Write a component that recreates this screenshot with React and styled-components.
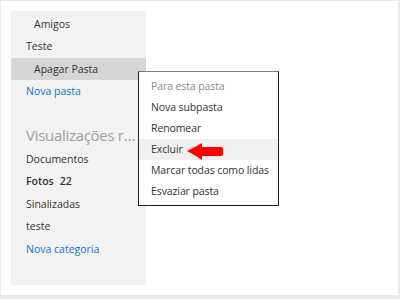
import styled, { createGlobalStyle } from "styled-components";

const GlobalStyle = createGlobalStyle`
  html, body {
    margin: 0;
    padding: 0;
    background: #e9e9e9;
  }
  body {
    font-family: "Open Sans", "Noto Sans", sans-serif;
  }
`;

const Frame = styled.div`
  width: 400px;
  height: 299px;
  padding: 1px 2px 4px 1px;
  box-sizing: border-box;
  background: #e9e9e9;
`;

const Panel = styled.div`
  position: relative;
  height: 100%;
  background: #fff;
  padding: 10px;
  box-sizing: border-box;
`;

const Sidebar = styled.nav`
  width: 135px;
  height: 274px;
  background: #f2f2f2;
  padding-top: 1.5px;
  box-sizing: border-box;
`;

const Item = styled.div`
  height: 22.5px;
  line-height: 22.5px;
  padding-left: ${(p) => (p.$indent ? "23px" : "15px")};
  font-size: 10.5px;
  color: ${(p) => (p.$link ? "#0f74c8" : "#333")};
  font-weight: ${(p) => (p.$bold ? 600 : 400)};
  background: ${(p) => (p.$selected ? "#d6d6d6" : "transparent")};
  white-space: nowrap;
`;

const Count = styled.span`
  margin-left: 6px;
`;

const Heading = styled.div`
  margin-top: 20px;
  height: 25px;
  line-height: 25px;
  padding: 0 4px 0 15px;
  font-size: 15px;
  letter-spacing: -0.3px;
  color: #a0a0a0;
  white-space: nowrap;
  overflow: hidden;
  text-overflow: ellipsis;
`;

const Menu = styled.div`
  position: absolute;
  left: 137px;
  top: 70px;
  width: 141px;
  height: 135px;
  box-sizing: border-box;
  background: #fff;
  border: 1px solid #1e1e1e;
  border-top-color: #7a7a7a;
  padding: 3.5px 0;
`;

const MenuItem = styled.div`
  height: 21px;
  line-height: 21px;
  padding-left: 12px;
  font-size: 10.5px;
  letter-spacing: -0.1px;
  color: ${(p) => (p.$muted ? "#8a8a8a" : "#333")};
  background: ${(p) => (p.$active ? "#f0f0f0" : "transparent")};
  white-space: nowrap;
`;

const Arrow = styled.svg`
  position: absolute;
  left: 185px;
  top: 141px;
`;

export default function App() {
  return (
    <Frame>
      <GlobalStyle />
      <Panel>
        <Sidebar>
          <Item $indent>Amigos</Item>
          <Item>Teste</Item>
          <Item $indent $selected>Apagar Pasta</Item>
          <Item $link>Nova pasta</Item>
          <Heading>Visualizações recentes</Heading>
          <Item>Documentos</Item>
          <Item $bold>
            Fotos<Count>22</Count>
          </Item>
          <Item>Sinalizadas</Item>
          <Item>teste</Item>
          <Item $link>Nova categoria</Item>
        </Sidebar>
        <Menu>
          <MenuItem $muted>Para esta pasta</MenuItem>
          <MenuItem>Nova subpasta</MenuItem>
          <MenuItem>Renomear</MenuItem>
          <MenuItem $active>Excluir</MenuItem>
          <MenuItem>Marcar todas como lidas</MenuItem>
          <MenuItem>Esvaziar pasta</MenuItem>
        </Menu>
        <Arrow width="38" height="20" viewBox="0 0 38 20">
          <path
            d="M1 9 Q9 5 16 1 L16 5 L35 5 Q37 5 37 7 L37 12 Q37 14 35 14 L16 14 L16 18 Q9 13 1 9 Z"
            fill="#f00"
          />
        </Arrow>
      </Panel>
    </Frame>
  );
}
